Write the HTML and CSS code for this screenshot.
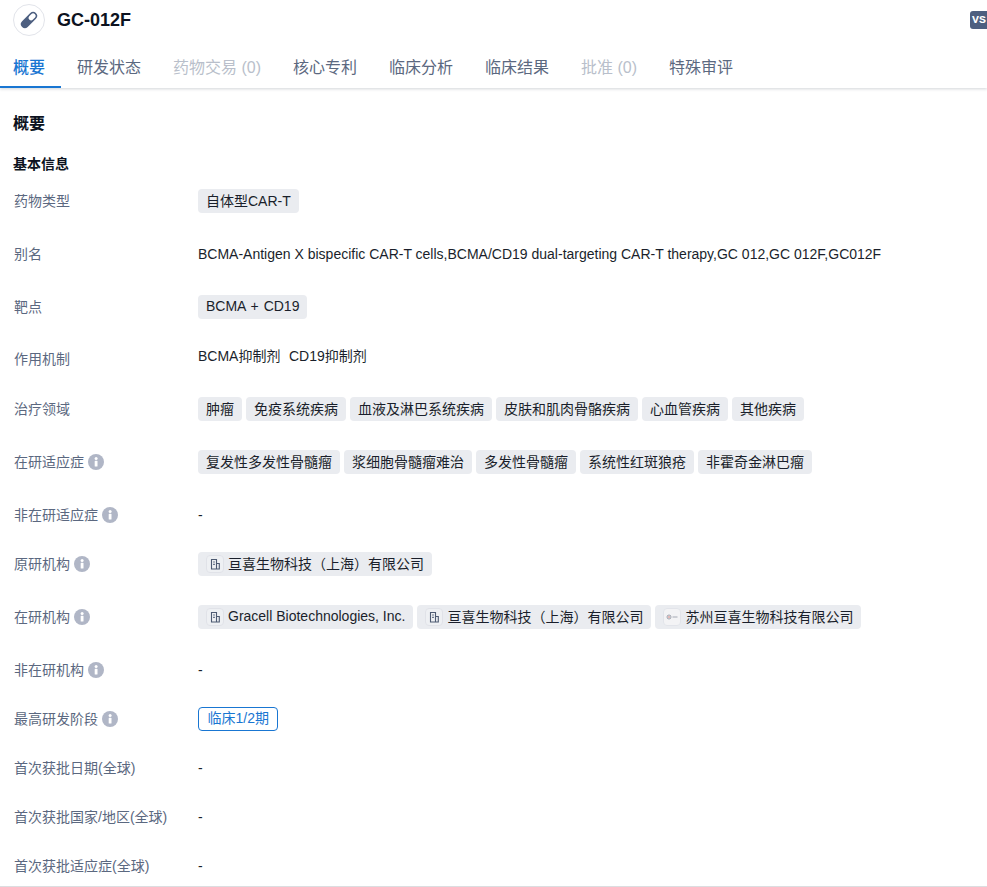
FILE: index.html
```html
<!DOCTYPE html>
<html lang="zh">
<head>
<meta charset="utf-8">
<title>GC-012F</title>
<link rel="stylesheet" href="styles.css">
</head>
<body>
<svg class="sprite" width="0" height="0">
  <symbol id="i-info" viewBox="0 0 16 16"><circle cx="8" cy="8" r="8" fill="#b0b6c6"/><rect x="6.7" y="6.8" width="2.8" height="5.8" rx=".6" fill="#fff"/><circle cx="8.1" cy="4.6" r="1.5" fill="#fff"/></symbol>
  <symbol id="i-org" viewBox="0 0 18 18"><rect x=".5" y=".5" width="17" height="17" rx="3.5" fill="#eef0f3" stroke="#e0e2e8"/><path d="M5.5 14V4.5h5V14zM10.5 8.5h2.8V14h-2.8M7.2 7h1.6M7.2 9.4h1.6" fill="none" stroke="#4d5a72" stroke-width="1.1"/></symbol>
</svg>
<header class="head">
  <div class="title-row">
    <span class="logo"><svg width="20" height="20" viewBox="0 0 20 20"><g transform="rotate(-45 10 10)"><rect x="0.2" y="6" width="19.6" height="8" rx="4" fill="#4d5f80"/><rect x="10.5" y="7.5" width="7.8" height="5" rx="2.3" fill="#fff"/></g></svg></span>
    <h1 class="name">GC-012F</h1>
    <span class="vs">VS</span>
  </div>
  <nav class="tabs">
    <a class="tab tab-on">概要</a>
    <a class="tab">研发状态</a>
    <a class="tab tab-off">药物交易 (0)</a>
    <a class="tab">核心专利</a>
    <a class="tab">临床分析</a>
    <a class="tab">临床结果</a>
    <a class="tab tab-off">批准 (0)</a>
    <a class="tab">特殊审评</a>
  </nav>
</header>
<main class="body">
  <h2 class="h2">概要</h2>
  <h3 class="h3">基本信息</h3>
  <div class="row r53"><div class="lab">药物类型</div><div class="val"><span class="tag">自体型CAR-T</span></div></div>
  <div class="row r53"><div class="lab">别名</div><div class="val val-text">BCMA-Antigen X bispecific CAR-T cells,BCMA/CD19 dual-targeting CAR-T therapy,GC 012,GC 012F,GC012F</div></div>
  <div class="row r52"><div class="lab">靶点</div><div class="val"><span class="tag tag-wide">BCMA + CD19</span></div></div>
  <div class="row r50"><div class="lab">作用机制</div><div class="val val-mech"><span>BCMA抑制剂</span><span>CD19抑制剂</span></div></div>
  <div class="row r53"><div class="lab">治疗领域</div><div class="val"><span class="tag">肿瘤</span><span class="tag">免疫系统疾病</span><span class="tag">血液及淋巴系统疾病</span><span class="tag">皮肤和肌肉骨骼疾病</span><span class="tag">心血管疾病</span><span class="tag">其他疾病</span></div></div>
  <div class="row r53"><div class="lab">在研适应症<svg class="info"><use href="#i-info"/></svg></div><div class="val"><span class="tag">复发性多发性骨髓瘤</span><span class="tag">浆细胞骨髓瘤难治</span><span class="tag">多发性骨髓瘤</span><span class="tag">系统性红斑狼疮</span><span class="tag">非霍奇金淋巴瘤</span></div></div>
  <div class="row r49"><div class="lab">非在研适应症<svg class="info"><use href="#i-info"/></svg></div><div class="val val-text">-</div></div>
  <div class="row r53"><div class="lab">原研机构<svg class="info"><use href="#i-info"/></svg></div><div class="val"><span class="tag"><svg class="org"><use href="#i-org"/></svg>亘喜生物科技（上海）有限公司</span></div></div>
  <div class="row r53"><div class="lab">在研机构<svg class="info"><use href="#i-info"/></svg></div><div class="val"><span class="tag"><svg class="org"><use href="#i-org"/></svg>Gracell Biotechnologies, Inc.</span><span class="tag"><svg class="org"><use href="#i-org"/></svg>亘喜生物科技（上海）有限公司</span><span class="tag"><svg class="org" viewBox="0 0 18 18"><rect x=".5" y=".5" width="17" height="17" rx="3.5" fill="#f3f3f5" stroke="#e2e4ea"/><circle cx="6" cy="9" r="2" fill="none" stroke="#8a8f9c" stroke-width=".8"/><circle cx="6" cy="9" r=".7" fill="#c9554f"/><path d="M9.5 9h5" stroke="#a5a9b4" stroke-width="1"/></svg>苏州亘喜生物科技有限公司</span></div></div>
  <div class="row r49"><div class="lab">非在研机构<svg class="info"><use href="#i-info"/></svg></div><div class="val val-text">-</div></div>
  <div class="row r49"><div class="lab">最高研发阶段<svg class="info"><use href="#i-info"/></svg></div><div class="val"><span class="stage">临床1/2期</span></div></div>
  <div class="row r49"><div class="lab">首次获批日期(全球)</div><div class="val val-text">-</div></div>
  <div class="row r49"><div class="lab">首次获批国家/地区(全球)</div><div class="val val-text">-</div></div>
  <div class="row r20"><div class="lab">首次获批适应症(全球)</div><div class="val val-text">-</div></div>
</main>
```

FILE: styles.css
```css
* { box-sizing: border-box; }
html, body { margin: 0; height: 887px; overflow: hidden; background: #fff; }
body {
  font-family: "Liberation Sans", "Noto Sans CJK SC", sans-serif;
  font-size: 14px;
  color: #1a1f2b;
  border-bottom: 1px solid #dcdde0;
}
.sprite { position: absolute; }
.head { height: 88px; box-shadow: 0 1px 3px rgba(30, 40, 60, .2); position: relative; }
.title-row { height: 44px; display: flex; align-items: flex-start; padding: 4px 0 0 13px; }
.logo {
  width: 32px; height: 32px; border: 1px solid #e2e4ea; border-radius: 50%;
  display: flex; align-items: center; justify-content: center; flex: none;
}
.name { margin: 0 0 0 12px; font-size: 18px; line-height: 32px; font-weight: 700; color: #0c1220; }
.vs {
  margin-left: auto; margin-top: 7px; width: 17px; height: 18px; padding-left: 2px; border-radius: 3px 0 0 3px;
  background: #4d5f80; color: #fff; font: 700 11.5px/18px "Liberation Mono", monospace;
}
.tabs { display: flex; height: 44px; }
.tab {
  padding: 0 16px; height: 44px; line-height: 47px; font-size: 16px; color: #5b6880; white-space: nowrap;
}
.tab:first-child { padding: 0 16px 0 13px; width: 61px; }
.tab-on { color: #1976d2; font-weight: 500; box-shadow: inset 0 -2px 0 #1976d2; }
.tab-off { color: #b9bfcb; }
.body { padding: 0 0 0 13px; }
.h2 { margin: 0; padding-top: 25px; font-size: 16px; line-height: 22px; font-weight: 700; color: #0c1220; }
.h3 { margin: 0; padding-top: 18px; font-size: 14px; line-height: 22px; font-weight: 700; color: #0c1220; }
.row { display: flex; align-items: flex-start; padding-top: 15px; }
.r53 { height: 53px; }
.r52 { height: 52px; }
.r50 { height: 50px; }
.r49 { height: 49px; }
.r20 { height: 40px; }
.lab {
  width: 185px; flex: none; padding-left: 1px; line-height: 22px; color: #5b6880; display: flex; align-items: center;
}
.info { width: 16px; height: 16px; margin-left: 4px; }
.val { display: flex; flex-wrap: nowrap; gap: 4px; white-space: nowrap; margin-top: -1px; }
.val-text { line-height: 22px; margin-top: 0; display: block; color: #1a1f2b; }
.val-mech { gap: 8.5px; line-height: 22px; margin-top: -3px; }
.tag {
  display: inline-flex; align-items: center; height: 24px; padding: 0 8px 2px; border-radius: 4px;
  background: #eaecf0; color: #1a1f2b;
}
.tag-wide { word-spacing: 1px; }
.org { width: 18px; height: 18px; margin: 2px 4px 0 0; flex: none; }
.stage {
  display: inline-block; height: 24px; line-height: 21px; padding: 0 8.5px; border: 1px solid #1976d2;
  border-radius: 4px; color: #1976d2; font-size: 14px;
}
```
